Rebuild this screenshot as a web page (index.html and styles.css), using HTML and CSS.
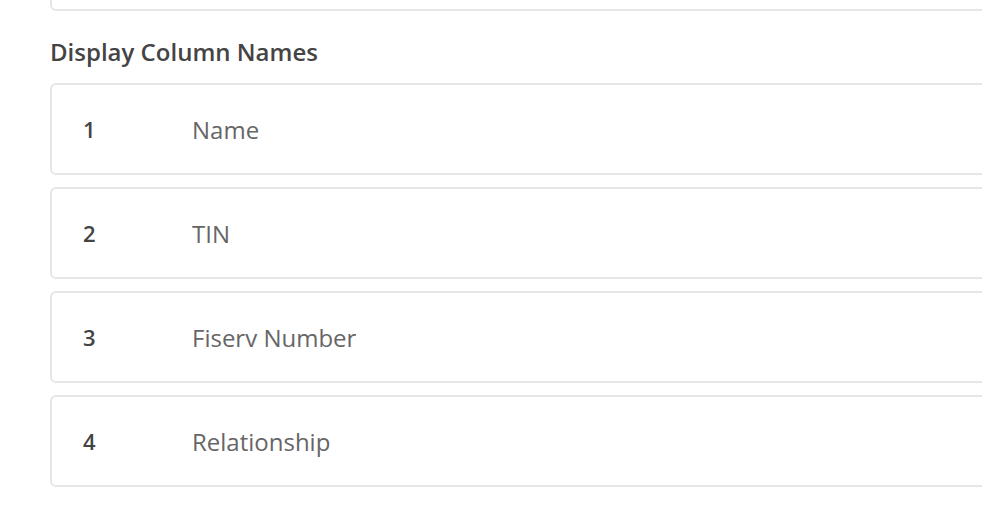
FILE: index.html
```html
<!DOCTYPE html>
<html>
<head>
<meta charset="utf-8">
<link rel="stylesheet" href="styles.css">
</head>
<body>
<div class="page">
  <div class="prev-card"></div>
  <h2 class="section-title">Display Column Names</h2>
  <div class="rows">
    <div class="row"><span class="num">1</span><span class="label">Name</span></div>
    <div class="row"><span class="num">2</span><span class="label">TIN</span></div>
    <div class="row"><span class="num">3</span><span class="label">Fiserv Number</span></div>
    <div class="row"><span class="num">4</span><span class="label">Relationship</span></div>
  </div>
</div>
</body>
</html>
```
FILE: styles.css
```css
html, body {
  margin: 0;
  padding: 0;
  background: #fff;
  overflow: hidden;
}
body {
  font-family: "Open Sans", "Liberation Sans", sans-serif;
  color: #444;
}
.page {
  padding-left: 50px;
  margin-right: -30px;
}
.prev-card {
  height: 9px;
  border: 2px solid #e6e6e6;
  border-top: none;
  border-radius: 0 0 6px 6px;
}
.section-title {
  margin: 0;
  padding-top: 25px;
  font-size: 24px;
  line-height: 32px;
  font-weight: 600;
  color: #444;
}
.rows {
  display: flex;
  flex-direction: column;
  gap: 12px;
  margin-top: 15px;
}
.row {
  display: flex;
  align-items: center;
  height: 88px;
  border: 2px solid #e6e6e6;
  border-radius: 6px;
  padding-left: 31px;
}
.num {
  width: 109px;
  font-size: 22px;
  font-weight: 600;
  color: #444;
}
.label {
  font-size: 24px;
  color: #666;
}
```
